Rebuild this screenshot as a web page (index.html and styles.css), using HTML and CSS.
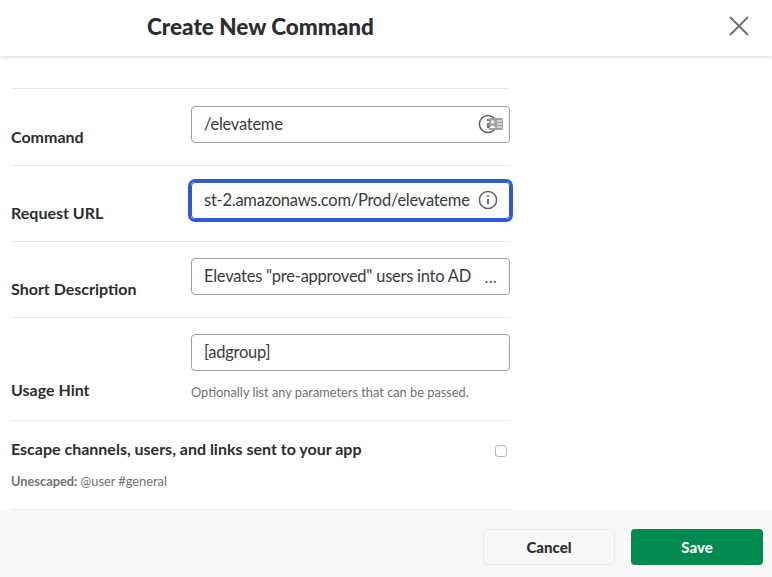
FILE: index.html
```html
<!DOCTYPE html>
<html lang="en">

<head>
  <meta charset="UTF-8">
  <meta name="viewport" content="width=device-width, initial-scale=1.0">
  <title>Create New Command</title>
  <link rel="stylesheet" href="styles.css">
</head>

<body>
  <header class="header">
    <h1>Create New Command</h1>
    <svg class="close" width="20" height="20" viewBox="0 0 20 20" fill="none" stroke="#717274" stroke-width="2">
      <path d="M1 1 L19 19 M19 1 L1 19" />
    </svg>
  </header>

  <main class="form">
    <div class="row">
      <div class="label">Command</div>
      <div class="control">
        <div class="field">
          <span class="value">/elevateme</span>
          <span class="field-icons">
            <svg class="info-icon" width="20" height="20" viewBox="0 0 20 20" fill="none" stroke="#616061" stroke-width="1.5">
              <circle cx="10" cy="10" r="8.6" />
              <path d="M10 9 V14.2" stroke-width="1.8" />
              <circle cx="10" cy="6" r="1.1" fill="#616061" stroke="none" />
            </svg>
            <svg class="contact-icon" width="14" height="12" viewBox="0 0 14 12">
              <rect x="0" y="0" width="14" height="12" rx="1.5" fill="#a0a0a2" />
              <circle cx="3.6" cy="4" r="1.8" fill="#fff" />
              <path d="M1 10 C1 6.6 6.2 6.6 6.2 10 Z" fill="#fff" />
              <path d="M8 3 H13 M8 6 H13 M8 9 H13" stroke="#fff" stroke-width="1.2" />
            </svg>
          </span>
        </div>
      </div>
    </div>

    <div class="row">
      <div class="label">Request URL</div>
      <div class="control">
        <div class="field focused">
          <span class="value">st-2.amazonaws.com/Prod/elevateme</span>
          <span class="field-icons">
            <svg class="info-icon" width="20" height="20" viewBox="0 0 20 20" fill="none" stroke="#616061" stroke-width="1.5">
              <circle cx="10" cy="10" r="8.6" />
              <path d="M10 9 V14.2" stroke-width="1.8" />
              <circle cx="10" cy="6" r="1.1" fill="#616061" stroke="none" />
            </svg>
          </span>
        </div>
      </div>
    </div>

    <div class="row">
      <div class="label">Short Description</div>
      <div class="control">
        <div class="field">
          <span class="value">Elevates "pre-approved" users into AD</span>
          <span class="more">...</span>
        </div>
      </div>
    </div>

    <div class="row row-hint">
      <div class="label">Usage Hint</div>
      <div class="control">
        <div class="field">
          <span class="value">[adgroup]</span>
        </div>
        <p class="hint">Optionally list any parameters that can be passed.</p>
      </div>
    </div>

    <div class="row-escape">
      <div class="escape-top">
        <div class="escape-title">Escape channels, users, and links sent to your app</div>
        <span class="checkbox"></span>
      </div>
      <p class="escape-note"><b>Unescaped:</b> @user #general</p>
    </div>
  </main>

  <footer class="footer">
    <button class="btn btn-cancel" type="button">Cancel</button>
    <button class="btn btn-save" type="button">Save</button>
  </footer>
</body>

</html>
```

FILE: styles.css
```css
* {
  box-sizing: border-box;
}

html,
body {
  height: 100%;
}

body {
  display: flex;
  flex-direction: column;
  height: 577px;
  margin: 0;
  overflow: hidden;
  font-family: Lato, "Liberation Sans", sans-serif;
  color: #2c2d30;
  background-color: #fff;
}

.header {
  display: flex;
  justify-content: space-between;
  align-items: center;
  height: 56px;
  padding: 0 23px 4px 147px;
  background-color: #fff;
  box-shadow: 0 1px 4px rgba(0, 0, 0, 0.16);
}

.header h1 {
  margin: 0;
  font-size: 22.5px;
  font-weight: 900;
}

.form {
  flex: 1;
  width: 499px;
  margin-left: 11px;
  padding-top: 32px;
}

.row {
  display: flex;
  align-items: flex-start;
  height: 77px;
  padding-top: 17px;
  border-top: 1px solid #e8e8e8;
}

.row:nth-child(2),
.row:nth-child(3) {
  height: 76px;
  padding-top: 16px;
}

.row-hint {
  height: 103px;
  padding-top: 16px;
}

.label {
  flex: 0 0 180px;
  padding-top: 21px;
  font-size: 16px;
  font-weight: 700;
  line-height: 20px;
}

.row-hint .label {
  padding-top: 46px;
}

.control {
  flex: 1;
  min-width: 0;
}

.field {
  display: flex;
  justify-content: space-between;
  align-items: center;
  height: 37px;
  padding: 0 12px 1px;
  border: 1px solid #a0a0a2;
  border-radius: 4px;
  font-size: 16.5px;
  letter-spacing: -0.25px;
  color: #3a3a3c;
}

.field.focused {
  border: 1px solid #2d5bd6;
  box-shadow: 0 0 0 3px #2d5bd6;
}

.value {
  white-space: nowrap;
}

.field-icons {
  display: flex;
  position: relative;
}

.info-icon {
  margin-right: -1px;
}

/* sits over the info icon, as in the reference */
.contact-icon {
  position: absolute;
  top: 4px;
  right: -6px;
}

.more {
  font-size: 18px;
  letter-spacing: 0;
  color: #616061;
}

.hint {
  margin: 12px 0 0;
  font-size: 12.8px;
  line-height: 18px;
  color: #717274;
}

.row-escape {
  height: 90px;
  padding-top: 17px;
  border-top: 1px solid #e8e8e8;
  border-bottom: 1px solid #e8e8e8;
}

.escape-top {
  display: flex;
  justify-content: space-between;
  align-items: center;
  padding-right: 3px;
}

.escape-title {
  font-size: 16px;
  font-weight: 700;
  line-height: 22px;
}

.checkbox {
  width: 12px;
  height: 12px;
  margin-top: 4px;
  border: 1px solid #b5b5b5;
  border-radius: 3px;
}

.escape-note {
  margin: 12px 0 0;
  font-size: 12.8px;
  line-height: 18px;
  color: #717274;
}

.footer {
  display: flex;
  justify-content: flex-end;
  gap: 16px;
  height: 67px;
  padding: 19px 9px 0 0;
  background-color: #f8f8f8;
}

.btn {
  width: 132px;
  height: 36px;
  border-radius: 4px;
  font-family: inherit;
  font-size: 15px;
  font-weight: 900;
  cursor: pointer;
}

.btn-cancel {
  border: 1px solid #e8e8e8;
  background-color: #f8f8f8;
  color: #2c2d30;
}

.btn-save {
  border: none;
  background-color: #008a4f;
  color: #fff;
}
```
